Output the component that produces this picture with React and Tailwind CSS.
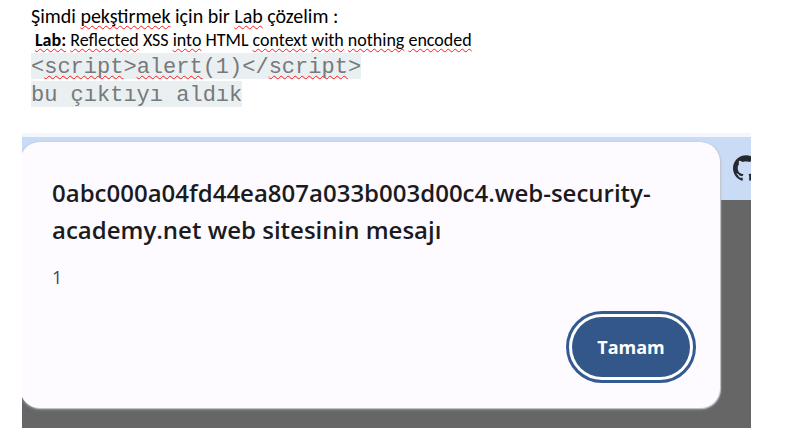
import { SiGithub } from "react-icons/si";

function Misspelled({ children }) {
  return (
    <span className="underline decoration-wavy decoration-[#ff1a1a] decoration-1 underline-offset-2 [text-decoration-skip-ink:none]">
      {children}
    </span>
  );
}

function Notes() {
  return (
    <section className="pl-[31px] pt-1 text-black">
      <p className="font-[Carlito,Lato,sans-serif] text-[20px] leading-6">
        Şimdi <Misspelled>pekştirmek</Misspelled> için bir <Misspelled>Lab</Misspelled> çözelim :
      </p>
      <p className="pb-px pl-1 font-[Carlito,Lato,sans-serif] text-[18px] leading-6">
        <b>
          <Misspelled>Lab:</Misspelled>
        </b>{" "}
        <Misspelled>Reflected</Misspelled> XSS <Misspelled>into</Misspelled> HTML{" "}
        <Misspelled>context</Misspelled> <Misspelled>with</Misspelled>{" "}
        <Misspelled>nothing</Misspelled> <Misspelled>encoded</Misspelled>
      </p>
      <div className="flex flex-col items-start gap-[2px] font-['Liberation_Mono',monospace] text-[22px] leading-[22px] text-[#77797a]">
        <code className="bg-[#eaeff1] pt-1 font-[inherit]">
          &lt;<Misspelled>script</Misspelled>&gt;<Misspelled>alert</Misspelled>(1)&lt;/
          <Misspelled>script</Misspelled>&gt;
        </code>
        <p className="bg-[#eaeff1] pt-1">bu çıktıyı aldık</p>
      </div>
    </section>
  );
}

function BrowserBackdrop() {
  return (
    <div className="flex min-w-0 flex-col [grid-area:1/1]">
      <div className="h-1 bg-[#f3f7fd]" />
      <div className="flex h-[63px] justify-end overflow-hidden bg-[#c9dbf5] pt-[18px]">
        <SiGithub className="-mr-2 size-[26px] shrink-0 text-[#24292f]" aria-label="GitHub" />
      </div>
      <div className="grow bg-[#666666]" />
    </div>
  );
}

function AlertDialog() {
  return (
    <div
      role="alertdialog"
      aria-labelledby="alert-title"
      aria-describedby="alert-message"
      className="z-10 mb-5 -ml-[2px] mr-[31px] mt-[9px] flex flex-col rounded-[20px] bg-[#fdfbff] pb-[25px] pl-8 pr-6 pt-8 font-['Open_Sans','Noto_Sans',sans-serif] shadow-[1px_1px_1px_0px_#c6c8ce,0_1px_3px_#a3abb8] [grid-area:1/1]"
    >
      <h1 id="alert-title" className="text-[24px] font-semibold leading-[37px] text-[#1b1b1f]">
        0abc000a04fd44ea807a033b003d00c4.web-security-<wbr />academy.net web sitesinin mesajı
      </h1>
      <p id="alert-message" className="mt-[15px] text-[18px] leading-7 text-[#45464f]">
        1
      </p>
      <button
        type="button"
        className="mt-5 h-[72px] w-[130px] self-end rounded-full border-[3px] border-[#335a91] bg-white p-[3px]"
      >
        <span className="flex h-full items-center justify-center rounded-full bg-[#335789] text-[18px] font-bold text-white">
          Tamam
        </span>
      </button>
    </div>
  );
}

export default function App() {
  return (
    <main className="bg-white pb-[10px]">
      <Notes />
      <figure className="ml-[22px] mr-[41px] mt-[26px] grid grid-cols-1 overflow-hidden">
        <BrowserBackdrop />
        <AlertDialog />
      </figure>
    </main>
  );
}
